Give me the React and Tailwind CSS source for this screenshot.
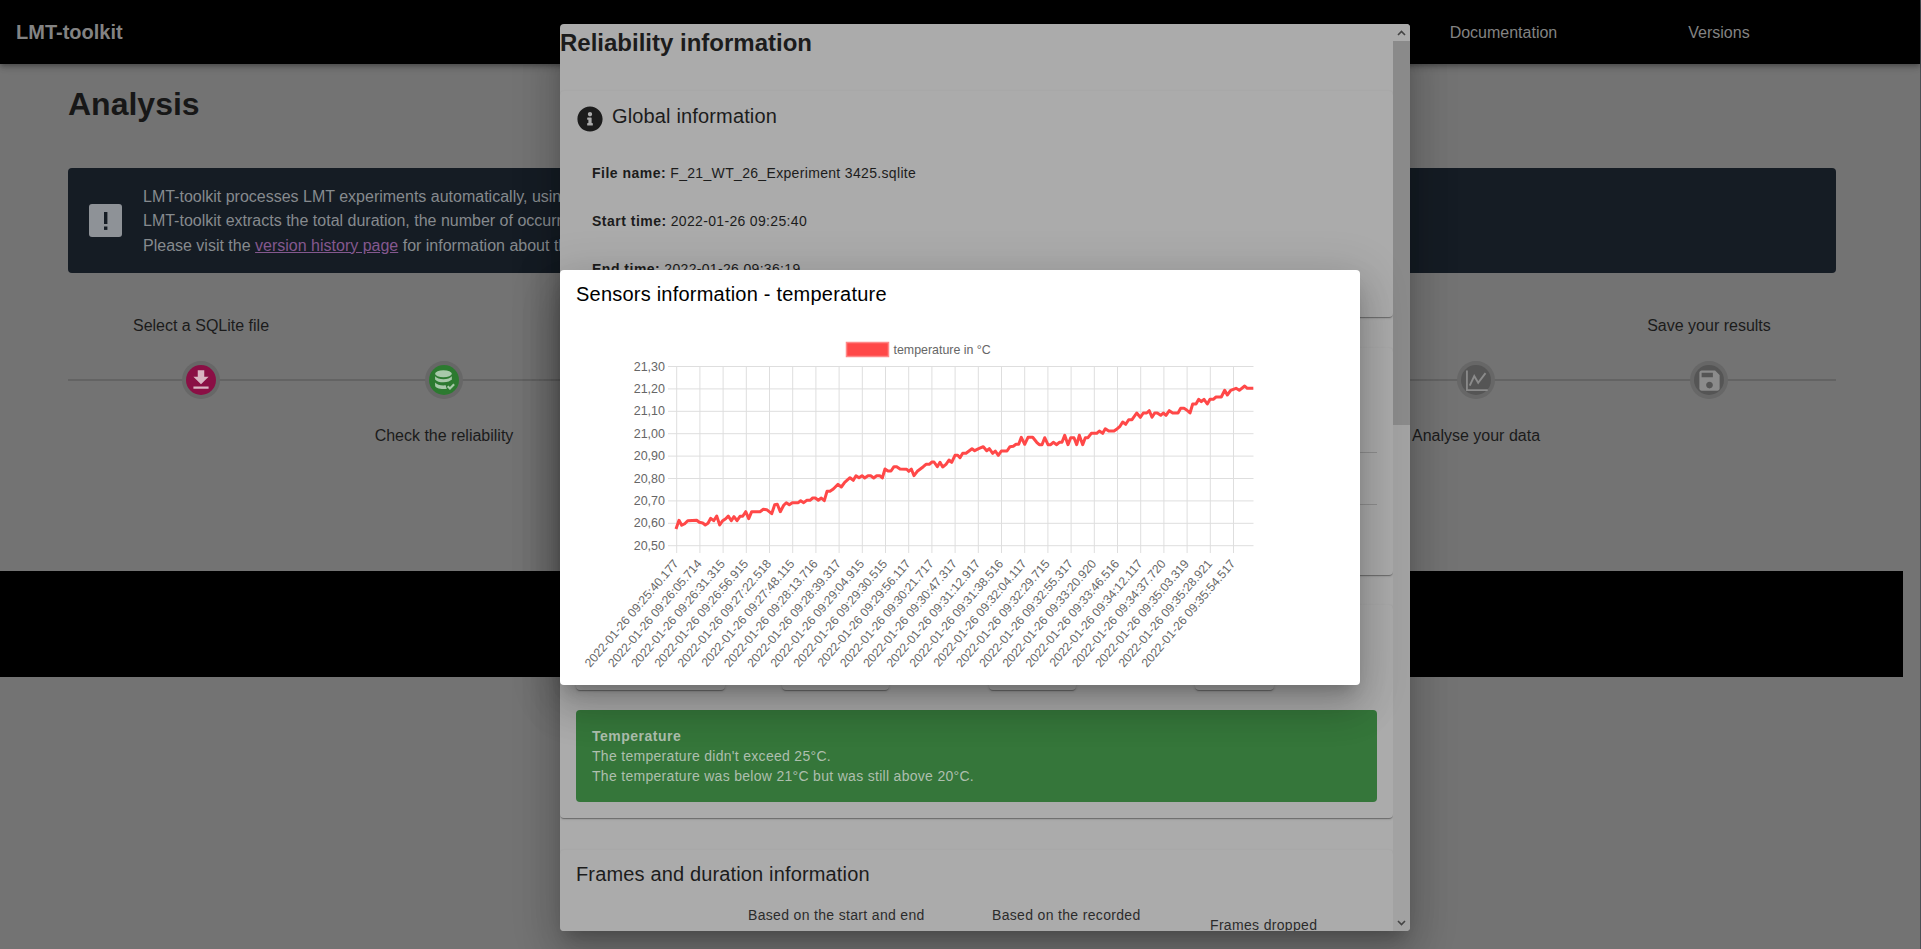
import React from "react";
import { FaInfoCircle } from "react-icons/fa";

const A = [[318,597],[327,571],[335,586],[344,581],[353,572],[380,571],[388,577],[398,579],[406,585],[414,580],[422,565],[431,572],[440,558],[449,585],[458,572],[467,566],[475,558],[484,572],[492,560],[501,572],[510,559],[518,559],[527,545],[536,566],[545,545],[570,545],[580,538],[590,539],[605,551],[614,524],[622,523],[631,545],[641,526],[649,518],[658,524],[667,518],[685,518],[692,512],[701,518],[710,511],[720,511],[728,504],[736,504],[745,511],[754,504],[763,512],[771,484],[780,484],[790,477],[804,463],[814,471],[824,457],[840,443],[850,451],[858,437],[867,443],[876,437],[884,444],[894,437],[902,437],[911,444],[920,437],[929,437],[937,444],[945,417],[954,423],[963,423],[972,410],[980,410],[990,417],[1010,418],[1016,424],[1024,417],[1032,437],[1042,424],[1060,410],[1068,403],[1078,403],[1086,396],[1092,396],[1102,410],[1110,397],[1118,411],[1128,403],[1137,390],[1145,397],[1155,376],[1163,376],[1170,383]];
const B = [[8,370],[18,370],[36,356],[44,362],[56,356],[70,350],[80,362],[88,356],[98,370],[106,363],[115,376],[124,363],[141,363],[150,350],[160,349],[168,343],[176,343],[184,322],[194,343],[204,322],[218,322],[230,337],[238,344],[246,344],[254,323],[264,344],[272,344],[280,337],[290,344],[298,337],[306,337],[314,316],[324,344],[332,323],[342,323],[350,344],[358,316],[368,344],[376,323],[384,323],[394,310],[410,310],[418,303],[428,310],[436,296],[446,303],[462,303],[472,296],[480,289],[488,276],[497,283],[506,269],[516,269],[530,249],[541,262],[550,249],[560,249],[568,242],[576,262],[584,249],[592,249],[602,256],[610,249],[618,256],[628,242],[638,249],[654,249],[662,235],[672,235],[680,240],[690,249],[698,222],[708,222],[716,208],[724,215],[732,208],[742,222],[750,208],[760,208],[768,201],[784,201],[794,181],[802,195],[812,181],[828,175],[838,181],[854,168],[862,175],[880,175]];
const POINTS = [
  ...A.map(([x, y]) => `${(570 + x / 3).toFixed(1)},${(330 + y / 3).toFixed(1)}`),
  ...B.map(([x, y]) => `${(960 + x / 3).toFixed(1)},${(330 + y / 3).toFixed(1)}`),
].join(" ");

const TIMES = ["09:25:40.177","09:26:05.714","09:26:31.315","09:26:56.915","09:27:22.518","09:27:48.115","09:28:13.716","09:28:39.317","09:29:04.915","09:29:30.515","09:29:56.117","09:30:21.717","09:30:47.317","09:31:12.917","09:31:38.516","09:32:04.117","09:32:29.715","09:32:55.317","09:33:20.920","09:33:46.516","09:34:12.117","09:34:37.720","09:35:03.319","09:35:28.921","09:35:54.517"];
const YS = ["21,30","21,20","21,10","21,00","20,90","20,80","20,70","20,60","20,50"];
const CARD = "shadow-[0_2px_1px_-1px_rgba(0,0,0,0.2),0_1px_1px_0_rgba(0,0,0,0.14),0_1px_3px_0_rgba(0,0,0,0.12)] rounded-[4px] bg-[#ababab]";
const DIALOG = "shadow-[0_11px_15px_-7px_rgba(0,0,0,0.2),0_24px_38px_3px_rgba(0,0,0,0.14),0_9px_46px_8px_rgba(0,0,0,0.12)] rounded-[4px]";

function Chart() {
  return (
    <svg width="800" height="367" viewBox="560 318 800 367" className="block" fontFamily="'Liberation Sans', Arial, sans-serif" fontSize="12.4" fill="#666">
      <rect x="846.5" y="342.5" width="42" height="14" fill="#ff4848" stroke="#ff8888" strokeWidth="1.5" />
      <text x="893.5" y="353.5">temperature in °C</text>
      {YS.map((t, i) => (
        <g key={t}>
          <line x1="668" x2="1253.5" y1={366.5 + 22.4 * i} y2={366.5 + 22.4 * i} stroke="#dedede" />
          <text x="665" y={370.5 + 22.4 * i} textAnchor="end" fontSize="12.5">{t}</text>
        </g>
      ))}
      {TIMES.map((t, i) => {
        const x = 676.7 + 23.2 * i;
        return (
          <g key={t}>
            <line x1={x} x2={x} y1="366" y2="553" stroke="#dedede" />
            <text x={x + 2.5} y="564" textAnchor="end" fontSize="12.2" transform={`rotate(-49.5 ${x + 2.5} 564)`}>{`2022-01-26 ${t}`}</text>
          </g>
        );
      })}
      <polyline points={POINTS} fill="none" stroke="#ff4848" strokeWidth="3" strokeLinejoin="round" />
    </svg>
  );
}

function Step({ label, below, ml, bg, children, iconClass }) {
  return (
    <div className="w-[200px] shrink-0 flex flex-col items-center" style={{ marginLeft: ml }}>
      <div className="h-6 leading-[26px] text-[16px] text-[#1b1b1b]">{below ? "" : label}</div>
      <div className="mt-6 w-[38px] h-[38px] rounded-full bg-[#676767] flex items-center justify-center">
        <div className={`w-[30px] h-[30px] rounded-full flex items-center justify-center ${bg} ${iconClass}`}>{children}</div>
      </div>
      <div className="mt-6 h-6 leading-[26px] text-[16px] text-[#1b1b1b]">{below ? label : ""}</div>
    </div>
  );
}

function Row({ label, value }) {
  return (
    <p className="h-12 flex items-center text-[14px] tracking-[0.33px] text-[#1c1c1c] pl-8 pt-[1px]">
      <b className="mr-1 tracking-[0.5px]">{label}</b>
      {value}
    </p>
  );
}

export default function App() {
  return (
    <div className="relative w-[1921px] h-[949px] overflow-hidden bg-[#4b4f54] font-['Liberation_Sans',Arial,sans-serif]">
      <div className="w-[1920px] h-full bg-[#737373]">
        <header className="h-16 bg-black shadow-[0_2px_4px_-1px_rgba(0,0,0,0.2),0_4px_5px_0_rgba(0,0,0,0.14),0_1px_10px_0_rgba(0,0,0,0.12)] flex items-center text-[#838383]">
          <span className="ml-4 text-[20px] font-bold">LMT-toolkit</span>
          <span className="ml-[1327px] text-[16px] pt-[1px]">Documentation</span>
          <span className="ml-[131px] text-[16px] pt-[1px]">Versions</span>
        </header>

        <main className="px-[68px]">
          <h1 className="pt-[20px] h-[104px] text-[32px] leading-10 font-bold text-[#171717] tracking-[0px]">Analysis</h1>
          <div className="w-[1768px] h-[105px] rounded-[4px] bg-[#151c24] flex items-center pl-[21px] text-[#868a8e]">
            <svg width="33" height="33" viewBox="0 0 33 33" className="shrink-0 mr-[21px]">
              <rect width="33" height="33" rx="3" fill="#8e9297" />
              <rect x="15" y="8" width="3.4" height="12" fill="#151c24" />
              <rect x="15" y="22.5" width="3.4" height="3.4" fill="#151c24" />
            </svg>
            <div className="text-[16px] leading-[24.5px] whitespace-nowrap pt-[2px]">
              <div>LMT-toolkit processes LMT experiments automatically, using</div>
              <div>LMT-toolkit extracts the total duration, the number of occurrences</div>
              <div>
                Please visit the <a className="underline text-[#84588f]">version history page</a> for information about the
              </div>
            </div>
          </div>

          <div className="relative mt-10 flex h-[134px]">
            <div className="absolute left-0 w-[1768px] top-[66px] h-[2px] bg-[#636363]" />
            <div className="relative flex">
              <Step label="Select a SQLite file" ml="33px" bg="bg-[#8a0f45]" iconClass="text-[#d9b4c2]">
                <svg width="26" height="26" viewBox="0 0 24 24" fill="currentColor"><path d="M19 9h-4V3H9v6H5l7 7 7-7zM5 18v2h14v-2H5z" /></svg>
              </Step>
              <Step label="Check the reliability" below ml="43px" bg="bg-[#2c7a30]" iconClass="text-[#a8c9aa]">
                <svg width="23" height="23" viewBox="0 0 22 22" fill="currentColor">
                  <ellipse cx="10" cy="4.6" rx="8" ry="3.4" />
                  <path d="M2 7c1.4 1.9 4.6 2.7 8 2.7s6.600-.8 8-2.700v3.200c-.8.200-2 .800-2.900 1.800-1.500.500-3.300.700-5.100.700-3.400 0-6.600-.800-8-2.700z" />
                  <path d="M2 13c1.400 1.900 4.600 2.700 8 2.700.8 0 1.500 0 2.200-.100.100 1.200.500 2.300 1.100 3.200-1 .200-2.100.300-3.300.300-4.400 0-8-1.500-8-3.400z" />
                  <path d="M14 16.500l2.200 2.200 4-4.200" fill="none" stroke="currentColor" strokeWidth="2" />
                </svg>
              </Step>
              <Step label="Analyse your data" below ml="832px" bg="bg-[#555555]" iconClass="text-[#8b8b8b]">
                <svg width="27" height="27" viewBox="0 0 24 24" fill="none" stroke="currentColor" strokeWidth="1.6">
                  <path d="M3.500 3v17.500H22" />
                  <path d="M6 16.500l4-8.500 3.500 6 6.500-8.500" strokeWidth="1.700" />
                </svg>
              </Step>
              <Step label="Save your results" ml="33px" bg="bg-[#555555]" iconClass="text-[#8b8b8b]">
                <svg width="27" height="27" viewBox="0 0 24 24" fill="currentColor"><path d="M17 3H5c-1.110 0-2 .900-2 2v14c0 1.100.890 2 2 2h14c1.100 0 2-.900 2-2V7l-4-4zm-5 16c-1.660 0-3-1.340-3-3s1.340-3 3-3 3 1.340 3 3-1.340 3-3 3zm3-10H5V5h10v4z" /></svg>
              </Step>
            </div>
          </div>
        </main>

        <div className="mt-[124px] w-[1903px] h-[106px] bg-black" />
      </div>

      {/* Reliability dialog */}
      <div className={`absolute left-[560px] top-6 w-[850px] h-[907px] bg-[#ababab] overflow-hidden flex ${DIALOG}`}>
        <div className="w-[833px] shrink-0 flex flex-col h-[1200px]">
          <h2 className="h-[67px] pt-[3px] text-[24px] leading-[32px] font-bold text-[#1c1c1c] shrink-0">Reliability information</h2>

          <section className={`${CARD} h-[226px] shrink-0`}>
            <div className="h-[58px] pl-[17px] flex items-center text-[#1c1c1c]">
              <FaInfoCircle className="text-[26px] mt-[-3px]" />
              <span className="ml-[9px] text-[20px] tracking-[0.15px] mt-[-8px]">Global information</span>
            </div>
            <Row label="File name:" value="F_21_WT_26_Experiment 3425.sqlite" />
            <Row label="Start time:" value="2022-01-26 09:25:40" />
            <Row label="End time:" value="2022-01-26 09:36:19" />
          </section>

          <section className={`${CARD} mt-[31px] h-[227px] shrink-0 px-4`}>
            <div className="h-[105px] border-b border-[#8f8f8f]" />
            <div className="h-[52px] border-b border-[#8f8f8f]" />
          </section>

          <section className={`${CARD} mt-[30px] h-[213px] shrink-0 px-4 pt-[49px]`}>
            <div className="flex h-9">
              <div className={`w-[149px] ${CARD}`} />
              <div className={`ml-[57px] w-[107px] ${CARD}`} />
              <div className={`ml-[100px] w-[87px] ${CARD}`} />
              <div className={`ml-[119px] w-[79px] ${CARD}`} />
            </div>
            <div className="mt-5 w-[801px] h-[92px] rounded-[4px] bg-[#35763a] pl-4 pt-4 text-[14px] leading-5 tracking-[0.3px] text-[#aebfae]">
              <div className="font-bold tracking-[0.5px]">Temperature</div>
              <div>The temperature didn't exceed 25°C.</div>
              <div>The temperature was below 21°C but was still above 20°C.</div>
            </div>
          </section>

          <section className={`${CARD} mt-8 flex-1 px-4 pt-2`}>
            <div className="text-[20px] leading-8 tracking-[0.15px] text-[#1c1c1c]">Frames and duration information</div>
            <div className="mt-[15px] h-10 flex items-center text-[14px] leading-5 tracking-[0.33px] text-[#2b2b2b]">
              <div className="ml-[172px] w-[244px] h-10">Based on the start and end</div>
              <div className="w-[218px] h-10">Based on the recorded</div>
              <div>Frames dropped</div>
            </div>
          </section>
        </div>

        <div className="w-[17px] shrink-0 h-full bg-[#a2a2a2] flex flex-col items-center">
          <div className="h-[17px] w-full bg-[#ababab] flex items-center justify-center">
            <svg width="9" height="6" viewBox="0 0 9 6" fill="none" stroke="#444" strokeWidth="1.600"><path d="M1 5l3.500-3.500L8 5" /></svg>
          </div>
          <div className="w-full h-[384px] bg-[#8a8a8a]" />
          <div className="mt-auto h-[17px] w-full flex items-center justify-center">
            <svg width="9" height="6" viewBox="0 0 9 6" fill="none" stroke="#444" strokeWidth="1.600"><path d="M1 1l3.500 3.500L8 1" /></svg>
          </div>
        </div>
      </div>

      {/* Sensors dialog */}
      <div className={`absolute left-[560px] top-[270px] w-[800px] h-[415px] bg-white ${DIALOG}`}>
        <div className="h-12 pl-4 pt-[8px] text-[20px] leading-8 tracking-[0.22px] text-black">Sensors information - temperature</div>
        <Chart />
      </div>
    </div>
  );
}
